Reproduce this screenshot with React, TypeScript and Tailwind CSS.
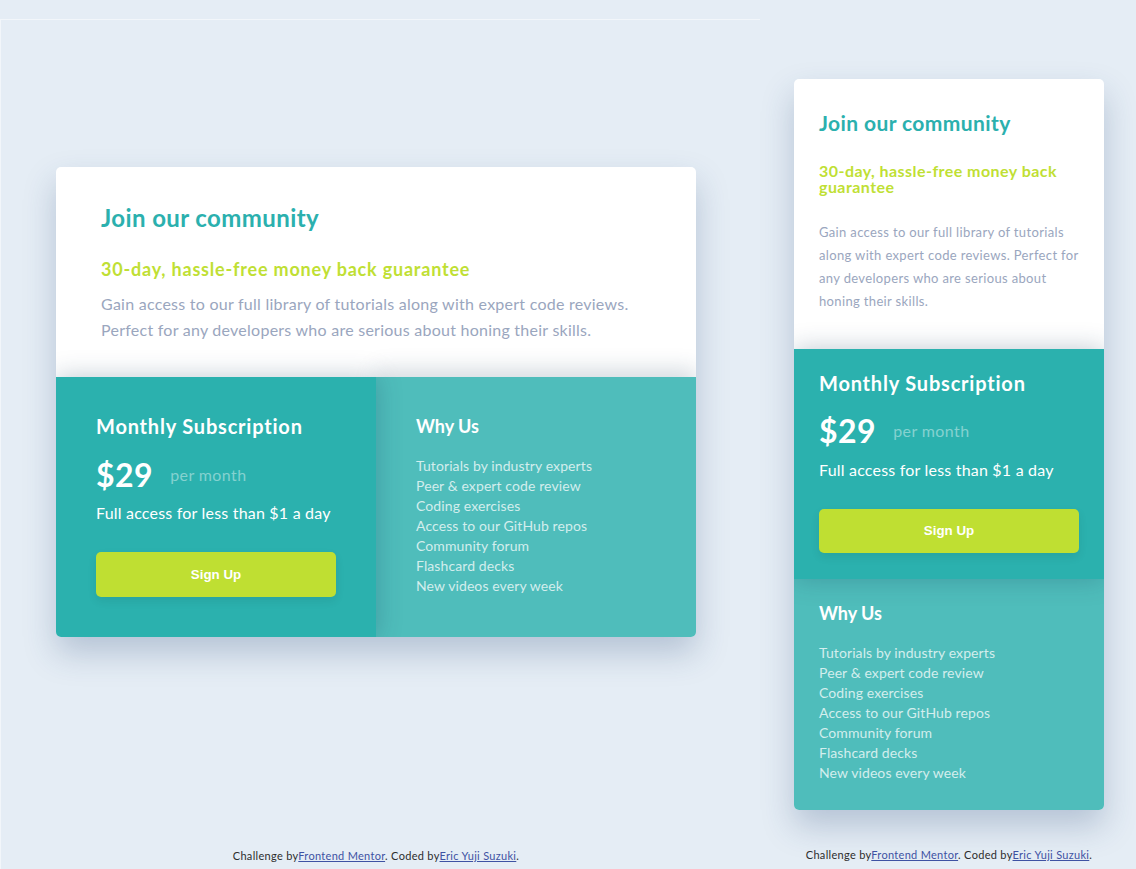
const features = [
  'Tutorials by industry experts',
  'Peer & expert code review',
  'Coding exercises',
  'Access to our GitHub repos',
  'Community forum',
  'Flashcard decks',
  'New videos every week',
];

function Credit() {
  return (
    <p className="text-[11px] leading-[14px] tracking-[0.3px] text-[#2d2d2d] text-center">
      Challenge by
      <a href="#" className="text-[#3e52a3] underline">
        Frontend Mentor
      </a>
      . Coded by
      <a href="#" className="text-[#3e52a3] underline">
        Eric Yuji Suzuki
      </a>
      .
    </p>
  );
}

function PriceCard({ mobile }: { mobile?: boolean }) {
  const subShadow = 'shadow-[0_0_24px_rgba(25,60,90,0.28)]';
  return (
    <div
      className={`rounded-[5px] overflow-hidden bg-white shadow-[0_16px_32px_rgba(40,70,120,0.25)] ${
        mobile ? 'w-[310px]' : 'w-[640px]'
      }`}
    >
      {/* Top */}
      <div className={mobile ? 'px-[25px] pt-[30px] pb-[36px]' : 'px-[45px] pt-[37px] pb-[34px]'}>
        <h1
          className={`font-bold text-[#2bb0ae] ${
            mobile
              ? 'text-[21px] leading-[28px] tracking-[0.4px]'
              : 'text-[24px] leading-[28px] tracking-[0.4px]'
          }`}
        >
          Join our community
        </h1>
        <h2
          className={`font-bold text-[#c0df34] ${
            mobile
              ? 'mt-[26px] text-[16px] leading-[16px] tracking-[0.45px]'
              : 'mt-[25px] text-[18px] leading-[24px] tracking-[0.8px]'
          }`}
        >
          30-day, hassle-free money back guarantee
        </h2>
        <p
          className={`text-[#9aa6be] ${
            mobile
              ? 'mt-[26px] text-[13px] leading-[23px] tracking-[0.35px]'
              : 'mt-[10px] text-[16px] leading-[26px] tracking-[0.25px]'
          }`}
        >
          Gain access to our full library of tutorials along with expert code reviews. Perfect for any developers
          who are serious about honing their skills.
        </p>
      </div>

      {/* Bottom */}
      <div className={mobile ? 'flex flex-col' : 'grid grid-cols-2'}>
        <div
          className={`relative z-10 bg-[#2bb1ae] text-white ${subShadow} ${
            mobile ? 'px-[25px] pt-[20px] pb-[26px]' : 'px-[40px] pt-[35px] pb-[40px]'
          }`}
        >
          <h3 className="text-[20px] leading-[28px] font-bold tracking-[0.8px]">Monthly Subscription</h3>
          <div className={`flex items-center gap-[17px] ${mobile ? 'mt-[14px]' : 'mt-[15px]'}`}>
            <span className="text-[32px] leading-[40px] font-bold tracking-[0.5px]">$29</span>
            <span className="text-[16px] tracking-[0.4px] text-[#85d2d0]">per month</span>
          </div>
          <p className={`text-[16px] leading-[24px] tracking-[0.2px] ${mobile ? 'mt-[7px]' : 'mt-[6px]'}`}>
            Full access for less than $1 a day
          </p>
          <button
            className={`mt-[27px] w-full rounded-[5px] bg-[#bfdf32] text-white font-bold text-[13.33px] font-['Liberation_Sans',sans-serif] shadow-[0_4px_10px_rgba(0,0,0,0.08)] ${
              mobile ? 'h-[44px]' : 'h-[45px]'
            }`}
          >
            Sign Up
          </button>
        </div>
        <div
          className={`bg-[#4fbdbb] text-white shadow-[0_-8px_20px_rgba(25,60,90,0.18)] ${
            mobile ? 'px-[25px] pt-[20px] pb-[27px]' : 'px-[40px] pt-[35px] pb-[40px]'
          }`}
        >
          <h3 className="text-[18px] leading-[28px] font-bold">Why Us</h3>
          <ul className="mt-[16px] text-[14px] leading-[20px] tracking-[0.1px] text-white/75">
            {features.map((f) => (
              <li key={f}>{f}</li>
            ))}
          </ul>
        </div>
      </div>
    </div>
  );
}

export default function App() {
  return (
    <div className="min-h-screen bg-[#e5edf5] flex font-['Lato',sans-serif]">
      {/* Desktop view */}
      <div className="w-[760px] mt-[19px] border-t border-l border-white/50 pl-[55px] pt-[147px] min-h-[850px]">
        <div className="w-[640px]">
          <PriceCard />
          <div className="mt-[212px]">
            <Credit />
          </div>
        </div>
      </div>

      {/* Mobile view */}
      <div className="pl-[34px] pt-[79px]">
        <div className="w-[310px]">
          <PriceCard mobile />
          <div className="mt-[38px] -mx-[20px]">
            <Credit />
          </div>
        </div>
      </div>
    </div>
  );
}
